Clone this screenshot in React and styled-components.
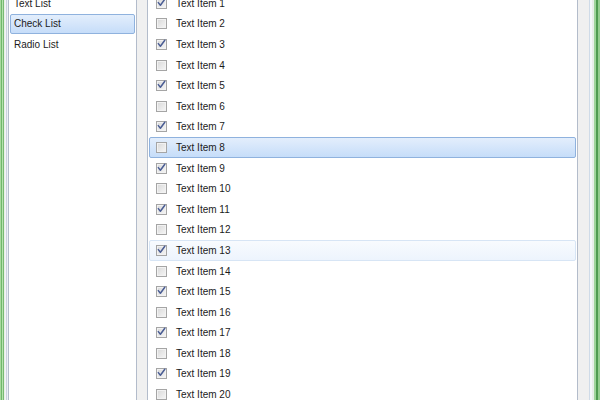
import React from "react";
import styled, { createGlobalStyle, css } from "styled-components";

const Global = createGlobalStyle`
  html, body { margin: 0; padding: 0; }
  body {
    width: 600px;
    height: 400px;
    overflow: hidden;
    background: #f0f0f0;
    font-family: "Liberation Sans", Arial, sans-serif;
  }
`;

const Window = styled.div`
  display: flex;
  width: 600px;
  height: 400px;
  overflow: hidden;
  background: #f0f0f0;
`;

const FrameLeft = styled.div`
  flex: 0 0 8px;
  background: linear-gradient(
    to right,
    #a9d9a0 0 1px,
    #6fb86a 1px 2px,
    #b5e0ae 2px 3px,
    #78bb72 3px 4px,
    #e9efe9 4px 5px,
    #f3f3f3 5px 6px,
    #c9d3df 6px 7px,
    #eef1f5 7px 8px
  );
`;

const FrameRight = styled.div`
  flex: 0 0 11px;
  background: linear-gradient(
    to right,
    #cfdbe8 0 1px,
    #f5f7f9 1px 3px,
    #e8efe8 3px 5px,
    #9fd49a 5px 7px,
    #4f9b4f 7px 9px,
    #93cc8d 9px 11px
  );
`;

const Content = styled.div`
  flex: 1;
  display: flex;
  gap: 10px;
  padding-right: 11px;
  margin-top: -9px;
  height: 440px;
`;

const ListBox = styled.div`
  display: flex;
  flex-direction: column;
  box-sizing: border-box;
  background: #ffffff;
  border: 1px solid #b3bccb;
  padding: 1px;
  width: ${(p) => p.$width}px;
  flex: ${(p) => (p.$grow ? "1" : "0 0 auto")};
`;

const Row = styled.div`
  display: flex;
  align-items: center;
  box-sizing: border-box;
  height: 20.6px;
  flex: 0 0 20.6px;
  padding-left: ${(p) => p.$indent}px;
  border: 1px solid transparent;
  border-radius: 2px;
  font-size: 10px;
  color: #1b1b1b;
  white-space: nowrap;
  ${(p) =>
    p.$state === "selected" &&
    css`
      border-color: #8fb2de;
      background: linear-gradient(to bottom, #e3eefc, #c6ddf9);
    `}
  ${(p) =>
    p.$state === "hover" &&
    css`
      border-color: #d7e5f5;
      background: linear-gradient(to bottom, #f8fbfe, #edf4fd);
    `}
`;

const Box = styled.span`
  position: relative;
  display: inline-flex;
  align-items: center;
  justify-content: center;
  box-sizing: border-box;
  width: 11px;
  height: 11px;
  margin-right: 9px;
  border: 1px solid #a5a5a5;
  background: linear-gradient(135deg, #d8d8d8, #f6f6f6);
  box-shadow: inset 0 0 0 1px #f2f2f2;
`;

const Check = () => (
  <svg width="9" height="9" viewBox="0 0 9 9" style={{ position: "absolute", left: 0, top: -1 }}>
    <path d="M1.3 4.6 L3.4 7.2 L7.8 1.2" fill="none" stroke="#4a5d94" strokeWidth="1.5" strokeLinejoin="round" strokeLinecap="round" />
  </svg>
);

const leftItems = ["Text List", "Check List", "Radio List"];
const rightItems = Array.from({ length: 21 }, (_, i) => i + 1);

export default function App() {
  return (
    <>
      <Global />
      <Window>
        <FrameLeft />
        <Content>
          <ListBox $width={129}>
            {leftItems.map((t, i) => (
              <Row key={t} $indent={3} $state={i === 1 ? "selected" : undefined}>
                {t}
              </Row>
            ))}
          </ListBox>
          <ListBox $grow>
            {rightItems.map((n) => (
              <Row
                key={n}
                $indent={6}
                $state={n === 8 ? "selected" : n === 13 ? "hover" : undefined}
              >
                <Box>{n % 2 === 1 && <Check />}</Box>
                Text Item {n}
              </Row>
            ))}
          </ListBox>
        </Content>
        <FrameRight />
      </Window>
    </>
  );
}
